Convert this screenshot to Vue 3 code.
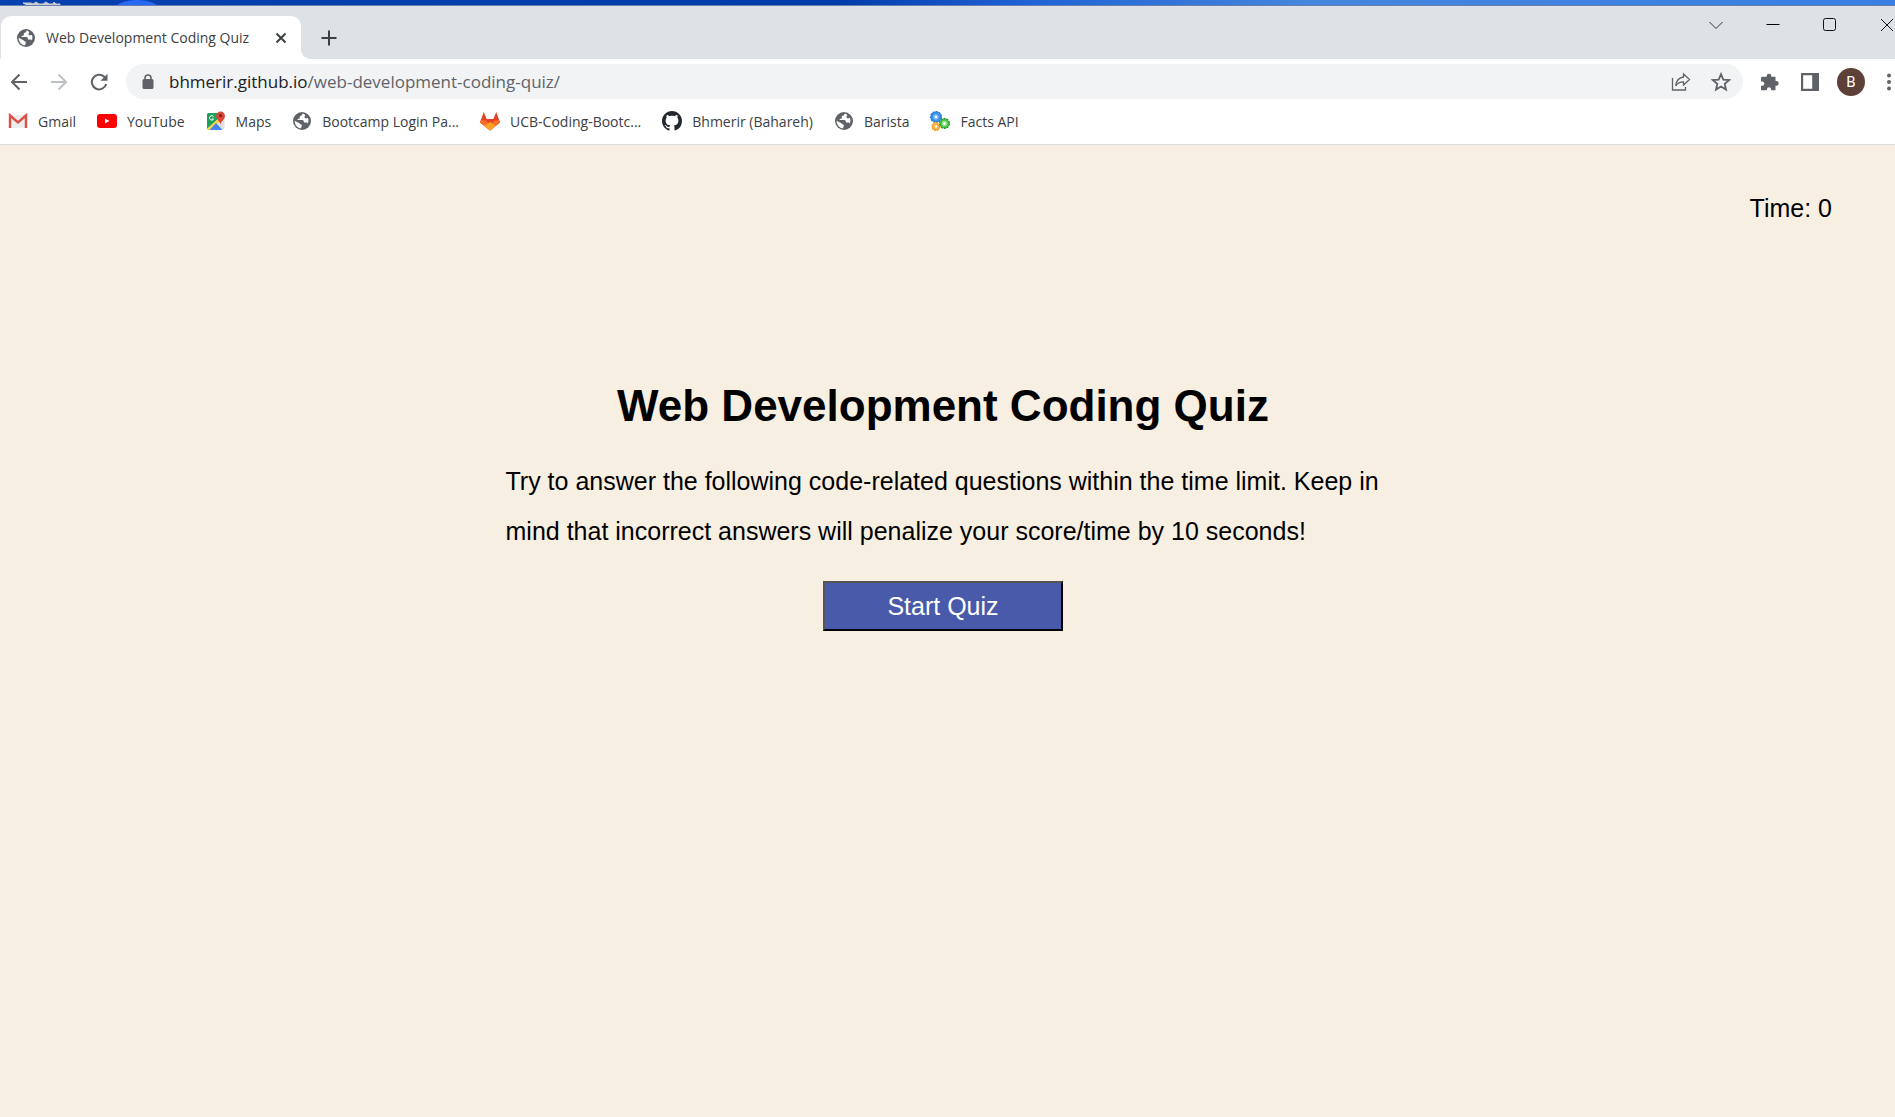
<script setup>
const bookmarks = [
  { icon: 'gmail', label: 'Gmail' },
  { icon: 'youtube', label: 'YouTube' },
  { icon: 'maps', label: 'Maps' },
  { icon: 'globe', label: 'Bootcamp Login Pa...' },
  { icon: 'gitlab', label: 'UCB-Coding-Bootc...' },
  { icon: 'github', label: 'Bhmerir (Bahareh)' },
  { icon: 'globe', label: 'Barista' },
  { icon: 'gears', label: 'Facts API' },
]
</script>

<template>
  <div class="window">
    <svg width="0" height="0" class="defs" aria-hidden="true">
      <symbol id="globe" viewBox="0 0 20 20">
        <circle cx="10" cy="10" r="9" fill="#5f6368" />
        <path d="M10.6 2.6c-.4 1.300-.6 1.900-1.800 2.200-1.200.3-1 1.300-1 2.100 0 .7-.7.8-1.600.8-.7 0-.7.8-.5 1.400h4.600c1 0 1.500.8 1.500 1.600 0 .7.5.9 1.300.9h1.400c.6 0 .9.500 1.200 1 .9-1.800 1-4 .2-5.800-.5.5-1.100.6-1.900.5-.9-.1-1.500-.5-1.500-1.300 0-.9.8-1.300.8-2.100-.8-.7-1.800-1.200-2.700-1.300z" fill="#fff" />
        <path d="M2.600 9.700 7.400 12.200c.8.500.9 1.100 1.600 1.200 1 .1 1 .9.700 1.600l-.6 2.300c-3.500-.2-6.300-3-6.500-7.600z" fill="#fff" />
      </symbol>
    </svg>

    <div class="desktop">
      <svg width="160" height="5" viewBox="0 0 160 5" aria-hidden="true">
        <path d="M23 3h8l2 1 3-2 3 2h4l3-2 3 2h4l1-2 2 2h4v1H27z" fill="#c9ccd0" stroke="#c9ccd0" />
        <ellipse cx="137" cy="10" rx="23" ry="10" fill="#2569f5" />
      </svg>
    </div>

    <header class="chrome">
      <div class="tabs">
        <div class="tab">
          <svg class="i18" viewBox="1 1 18 18"><use href="#globe" width="20" height="20" /></svg>
          <span class="tab-title">Web Development Coding Quiz</span>
          <button class="close" aria-label="Close tab">
            <svg width="12" height="12" viewBox="0 0 12 12"><path d="M1.500 1.500l9 9M10.500 1.500l-9 9" stroke="#3c4043" stroke-width="2" /></svg>
          </button>
        </div>
        <button class="new-tab" aria-label="New tab">
          <svg width="16" height="16" viewBox="0 0 16 16"><path d="M8 .5v15M.5 8h15" stroke="#3c4043" stroke-width="2" /></svg>
        </button>
        <div class="controls">
          <button aria-label="Search tabs"><svg width="14" height="14" viewBox="0 0 14 14"><path d="M.5 4l6.500 6.500L13.500 4" fill="none" stroke="#333" /></svg></button>
          <button aria-label="Minimize"><svg width="14" height="14" viewBox="0 0 14 14"><path d="M.5 6.500h13" stroke="#000" /></svg></button>
          <button aria-label="Maximize"><svg width="14" height="14" viewBox="0 0 14 14"><rect x=".5" y=".5" width="12" height="12" rx="2" fill="none" stroke="#111" /></svg></button>
          <button aria-label="Close"><svg width="14" height="14" viewBox="0 0 14 14"><path d="M1 1l12 12M13 1L1 13" stroke="#111" /></svg></button>
        </div>
      </div>

      <div class="toolbar">
        <div class="nav">
          <button aria-label="Back"><svg width="18" height="18" viewBox="0 0 18 18"><path d="M17 9H2.500M9.500 1.500L2 9l7.500 7.500" fill="none" stroke="#5f6368" stroke-width="2" /></svg></button>
          <button aria-label="Forward"><svg width="18" height="18" viewBox="0 0 18 18"><path d="M1 9h14.500M8.500 1.500L16 9l-7.500 7.500" fill="none" stroke="#bdc1c6" stroke-width="2" /></svg></button>
          <button aria-label="Reload"><svg width="18" height="18" viewBox="0 0 18 18"><path d="M16.200 11A7.300 7.300 0 1 1 14 3.600L16 6" fill="none" stroke="#5f6368" stroke-width="2" /><path d="M17.500 .8v7h-7z" fill="#5f6368" /></svg></button>
        </div>
        <div class="omnibox">
          <svg width="12" height="16" viewBox="0 0 12 16"><rect x=".5" y="5" width="11" height="10" rx="1.500" fill="#5f6368" /><path d="M3 6V4a3 3 0 0 1 6 0v2" fill="none" stroke="#5f6368" stroke-width="1.600" /></svg>
          <a class="url" href="#"><span>bhmerir.github.io</span>/web-development-coding-quiz/</a>
          <button aria-label="Share"><svg width="20" height="20" viewBox="0 0 20 20" fill="none" stroke="#5f6368" stroke-width="1.300"><path d="M1.500 6v12h13v-3" /><path d="M12.500 2l6 5.500-6 5.500v-3.200c-3.700 0-6 1.200-7.800 4C5.300 8.800 8 5.500 12.500 5z" /></svg></button>
          <button aria-label="Bookmark"><svg width="20" height="20" viewBox="0 0 20 20"><path d="M10 2.200l2.300 5.400 5.800.5-4.400 3.800 1.300 5.700L10 14.600l-5 3 1.300-5.700-4.400-3.800 5.800-.5z" fill="none" stroke="#5f6368" stroke-width="1.800" /></svg></button>
        </div>
        <div class="tools">
          <button aria-label="Extensions"><svg width="18" height="18" viewBox="0 0 18 18"><path d="M1.500 3.800h4.200V3a2.300 2.300 0 0 1 4.600 0v.8h4.200v4.300h.9a2.300 2.300 0 0 1 0 4.600h-.9v4.600h-4.400v-.9a2.100 2.100 0 0 0-4.200 0v.9H0v-4.500h1.200a2.200 2.200 0 0 0 0-4.400H0V5.300c0-.9.600-1.500 1.500-1.500z" fill="#5f6368" /></svg></button>
          <button aria-label="Side panel"><svg width="18" height="18" viewBox="0 0 18 18"><path d="M0 0h18v18H0zM2.200 2.200v13.600h9V2.200z" fill="#5f6368" fill-rule="evenodd" /></svg></button>
          <button class="avatar" aria-label="Profile">B</button>
          <button aria-label="Menu"><svg width="4" height="18" viewBox="0 0 4 18" fill="#5f6368"><circle cx="2" cy="2.500" r="2" /><circle cx="2" cy="9" r="2" /><circle cx="2" cy="15.500" r="2" /></svg></button>
        </div>
      </div>

      <nav class="bookmarks">
        <a v-for="b in bookmarks" :key="b.label" href="#">
          <svg class="i20" viewBox="0 0 20 20" aria-hidden="true">
            <use v-if="b.icon === 'globe'" href="#globe" />
            <g v-else-if="b.icon === 'gmail'">
              <path d="M1 4h18v13H1z" fill="#eceded" />
              <path d="M2 17V4.500l8 7 8-7V17" fill="none" stroke="#dd5145" stroke-width="2.400" />
            </g>
            <g v-else-if="b.icon === 'youtube'">
              <rect y="3" width="20" height="14" rx="3" fill="#f00" /><path d="M8 7.500v5l4.500-2.500z" fill="#fff" />
            </g>
            <g v-else-if="b.icon === 'maps'">
              <path d="M3 2.500h14a1.500 1.500 0 0 1 1.500 1.500v13a1.500 1.500 0 0 1-1.500 1.500H3z" fill="#dfe1e5" />
              <path d="M2.500 2H14L12 8 1 18V3.500A1.500 1.500 0 0 1 2.500 2z" fill="#1fa15d" />
              <path d="M1 18L13 7l2 2-10 10H2z" fill="#ffd23f" />
              <path d="M3.500 19L10 12l6.500 7z" fill="#4285f4" />
              <path d="M7.500 5.500a2.200 2.200 0 1 0 .2 2.500H5.800" fill="none" stroke="#fff" />
              <path d="M14.500 14c0-4-4.300-5-4.300-9a4.300 4.300 0 0 1 8.800 0c0 4-4.500 5-4.500 9z" fill="#dc4437" /><circle cx="14.600" cy="4.600" r="1.600" fill="#7b231e" />
            </g>
            <g v-else-if="b.icon === 'gitlab'">
              <path d="M3.700 1L0 11.500 10 19.500l10-8L16.300 1l-3 7H6.700z" fill="#e24329" />
              <path d="M1 9l-1 2.500 10 8 10-8L19 9l-4.500.5L10 13.500 5.500 9.500z" fill="#fc6d26" />
              <path d="M4.500 14.800L10 11l5.500 3.800-5.500 4.700z" fill="#fca326" />
            </g>
            <path v-else-if="b.icon === 'github'" transform="scale(1.250)" d="M8 0C3.580 0 0 3.580 0 8c0 3.540 2.290 6.530 5.470 7.590.4.070.55-.17.55-.38 0-.19-.01-.82-.01-1.490-2.010.37-2.530-.49-2.690-.94-.09-.23-.48-.94-.82-1.130-.28-.15-.68-.52-.01-.53.63-.01 1.080.58 1.230.82.72 1.210 1.870.87 2.330.66.07-.52.28-.87.51-1.070-1.780-.2-3.640-.89-3.640-3.950 0-.87.31-1.590.82-2.150-.08-.2-.36-1.020.08-2.120 0 0 .67-.21 2.200.82.64-.18 1.320-.27 2-.27s1.360.09 2 .27c1.530-1.040 2.200-.82 2.200-.82.44 1.100.16 1.920.08 2.120.51.56.82 1.270.82 2.150 0 3.070-1.870 3.750-3.650 3.950.29.25.54.73.54 1.480 0 1.070-.01 1.930-.01 2.200 0 .21.15.46.55.38A8.010 8.010 0 0 0 16 8c0-4.420-3.580-8-8-8z" fill="#24292f" />
            <g v-else fill="none">
              <circle cx="6" cy="6" r="3.500" stroke="#3b93ea" stroke-width="4" /><circle cx="6" cy="6" r="5.300" stroke="#1f78d0" stroke-width="1.400" stroke-dasharray="2 1" /><circle cx="6" cy="6" r="2.200" stroke="#9fd0fa" />
              <circle cx="6" cy="15.500" r="2.700" stroke="#fbb64a" stroke-width="3" /><circle cx="6" cy="15.500" r="3.900" stroke="#ee9a26" stroke-width="1.200" stroke-dasharray="2 1" />
              <circle cx="14.500" cy="12.500" r="3.200" stroke="#4fc646" stroke-width="3.400" /><circle cx="14.500" cy="12.500" r="4.800" stroke="#259a28" stroke-width="1.400" stroke-dasharray="2 1" /><circle cx="14.500" cy="12.500" r="2.200" stroke="#a8eaa0" />
            </g>
          </svg>
          <span>{{ b.label }}</span>
        </a>
      </nav>
    </header>

    <main>
      <p class="timer">Time: 0</p>
      <section class="intro">
        <h1>Web Development Coding Quiz</h1>
        <p>Try to answer the following code-related questions within the time limit. Keep in mind that incorrect answers will penalize your score/time by 10 seconds!</p>
        <button class="start">Start Quiz</button>
      </section>
    </main>
  </div>
</template>

<style>
body { margin: 0; background: #f7efe2; }
</style>

<style scoped>
* { box-sizing: border-box; }
svg { display: block; flex: none; }
.defs { position: absolute; }
.window { min-height: 100vh; display: flex; flex-direction: column; overflow: hidden; font-family: "Open Sans", sans-serif; font-size: 14px; color: #3c4043; }
.desktop { height: 6px; border-bottom: 1px solid #6a7fae; background: linear-gradient(90deg, #0741b0 0%, #013aa9 44%, #1e62d6 54%, #4487dc 69%, #387fe5 100%); }
.chrome button { border: 0; padding: 0; background: none; display: flex; align-items: center; justify-content: center; font: inherit; }
.tabs { display: flex; height: 53px; background: #dee1e6; padding-left: 1px; }
.tab { position: relative; display: flex; align-items: center; width: 300px; height: 43px; margin-top: 10px; padding: 0 14px 0 16px; background: #fff; border-radius: 10px 10px 0 0; }
.tab::after { content: ""; position: absolute; left: 100%; bottom: 0; width: 10px; height: 10px; background: radial-gradient(circle at 100% 0, transparent 10px, #fff 10px); }
.i18 { width: 18px; height: 18px; }
.i20 { width: 20px; height: 20px; }
.tab-title { margin-left: 11px; flex: 1; white-space: nowrap; }
.new-tab { margin: 11px 0 0 20px; width: 16px; height: 42px; }
.controls { display: flex; gap: 43px; margin: 12px 1px 0 auto; height: 14px; }
.toolbar { display: flex; align-items: center; height: 45px; padding: 0 4px 0 10px; background: #fff; }
.nav { display: flex; gap: 22px; }
.omnibox { flex: 1; display: flex; align-items: center; height: 35px; margin: 0 18px; padding: 0 12px 0 16px; border-radius: 18px; background: #f1f3f4; }
.url { flex: 1; margin-left: 15px; font-size: 17px; color: #5f6368; text-decoration: none; }
.url span { color: #202124; }
.omnibox button + button { margin-left: 20px; }
.tools { display: flex; align-items: center; gap: 22px; }
.chrome .avatar { width: 28px; height: 28px; margin: 0 0 0 -4px; border-radius: 50%; background: #5d4037; color: #fff; font-family: Roboto, sans-serif; font-size: 15px; }
.bookmarks { display: flex; align-items: center; gap: 21px; height: 41px; padding: 0 0 6px 8px; background: #fff; border-bottom: 1px solid #dadce0; }
.bookmarks a { display: flex; align-items: center; gap: 10px; color: #3c4043; text-decoration: none; white-space: nowrap; }
main { flex: 1; background: #f7efe2; color: #000; font-family: "Liberation Sans", Arial, sans-serif; font-size: 25px; line-height: 50px; padding-right: 9px; }
main p { margin: 0; }
.timer { padding: 38px 54px 0 0; text-align: right; }
.intro { max-width: 875px; margin: 146px auto 0; display: flex; flex-direction: column; align-items: center; }
h1 { margin: 0; font-size: 44px; line-height: 54px; }
.intro p { margin-top: 23px; }
.start { width: 240px; height: 50px; margin-top: 25px; border: 2px outset #000; background: #485aa9; color: #fff; font: inherit; line-height: 40px; padding: 0; }
</style>
